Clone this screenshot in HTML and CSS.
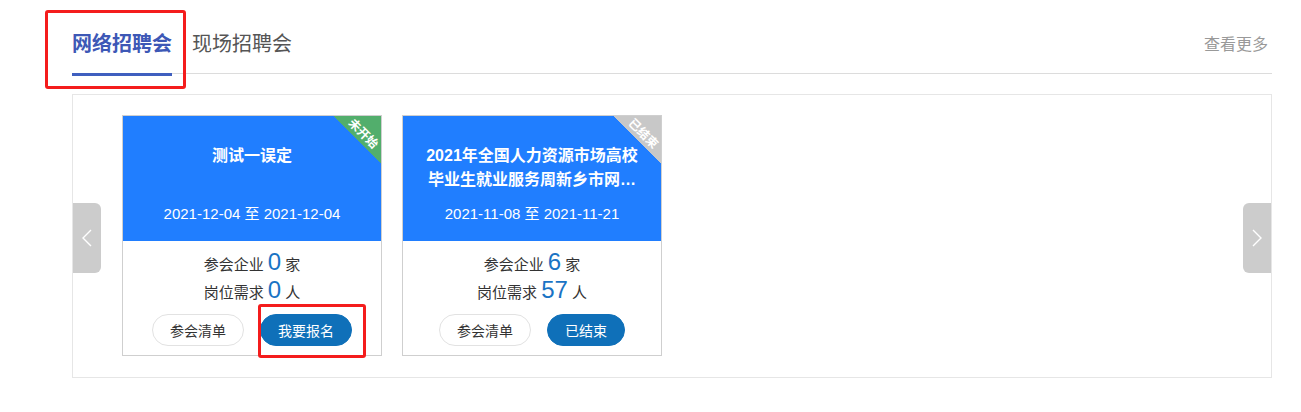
FILE: index.html
```html
<!DOCTYPE html>
<html lang="zh-CN">
<head>
<meta charset="utf-8">
<title>招聘会</title>
<link rel="stylesheet" href="styles.css">
</head>
<body>
<div class="page">
  <div class="tabs">
    <div class="tab active">网络招聘会</div>
    <div class="tab">现场招聘会</div>
    <a class="more">查看更多</a>
  </div>
  <div class="box">
    <div class="arrow arrow-left">
      <svg width="12" height="18" viewBox="0 0 12 18"><polyline points="10,1 2,9 10,17" fill="none" stroke="#fff" stroke-width="1.4"/></svg>
    </div>
    <div class="card">
      <div class="card-head">
        <div class="corner corner-green"><span>未开始</span></div>
        <div class="card-title">测试一误定</div>
        <div class="card-date">2021-12-04 至 2021-12-04</div>
      </div>
      <div class="card-body">
        <div class="stat">参会企业 <span class="num">0</span> 家</div>
        <div class="stat">岗位需求 <span class="num">0</span> 人</div>
        <div class="btns">
          <span class="btn btn-plain">参会清单</span>
          <span class="btn btn-primary">我要报名</span>
        </div>
      </div>
    </div>
    <div class="card">
      <div class="card-head">
        <div class="corner corner-gray"><span>已结束</span></div>
        <div class="card-title">2021年全国人力资源市场高校毕业生就业服务周新乡市网络招聘会</div>
        <div class="card-date">2021-11-08 至 2021-11-21</div>
      </div>
      <div class="card-body">
        <div class="stat">参会企业 <span class="num">6</span> 家</div>
        <div class="stat">岗位需求 <span class="num">57</span> 人</div>
        <div class="btns">
          <span class="btn btn-plain">参会清单</span>
          <span class="btn btn-primary">已结束</span>
        </div>
      </div>
    </div>
    <div class="arrow arrow-right">
      <svg width="12" height="18" viewBox="0 0 12 18"><polyline points="2,1 10,9 2,17" fill="none" stroke="#fff" stroke-width="1.4"/></svg>
    </div>
  </div>
</div>
<div class="mark mark-tab"></div>
<div class="mark mark-btn"></div>
</body>
</html>
```
FILE: styles.css
```css
* { box-sizing: border-box; }
body {
  margin: 0;
  background: #fff;
  font-family: "Liberation Sans", "Noto Sans CJK SC", sans-serif;
  color: #333;
  position: relative;
}
.page {
  width: 1200px;
  margin-left: 72px;
}
.tabs {
  display: flex;
  align-items: flex-start;
  border-bottom: 1px solid #dcdcdc;
}
.tab {
  font-size: 20px;
  line-height: 20px;
  padding: 33px 0 20px;
  color: #555;
  font-family: "Noto Sans CJK SC", sans-serif;
}
.tab + .tab { margin-left: 20px; }
.tab.active {
  color: #3d58b6;
  font-weight: bold;
  border-bottom: 3px solid #3f5fbf;
  margin-bottom: -3px;
}
.more {
  margin-left: auto;
  font-size: 16px;
  line-height: 16px;
  padding: 35px 4px 0 0;
  color: #999;
  font-family: "Noto Sans CJK SC", sans-serif;
}
.box {
  position: relative;
  margin-top: 20px;
  border: 1px solid #e6e6e6;
  padding: 20px 0 21px 49px;
  display: flex;
  gap: 20px;
}
.arrow {
  position: absolute;
  top: 108px;
  width: 28px;
  height: 70px;
  background: #cccccc;
  display: flex;
  align-items: center;
  justify-content: center;
}
.arrow-left { left: 0; border-radius: 0 6px 6px 0; }
.arrow-right { right: 0; border-radius: 6px 0 0 6px; }
.card {
  width: 260px;
  border: 1px solid #cfcfcf;
}
.card-head {
  position: relative;
  height: 125px;
  background: #207eff;
  color: #fff;
  padding: 28px 19px 0;
  text-align: center;
  overflow: hidden;
}
.card-title {
  font-size: 16px;
  line-height: 24px;
  height: 48px;
  font-weight: bold;
  display: -webkit-box;
  -webkit-line-clamp: 2;
  -webkit-box-orient: vertical;
  overflow: hidden;
}
.card-date {
  margin-top: 10px;
  font-size: 15px;
  line-height: 24px;
}
.corner {
  position: absolute;
  top: 0;
  right: 0;
  width: 48px;
  height: 48px;
}
.corner-green { background: linear-gradient(to bottom left, #52ae6c 50%, transparent 50%); }
.corner-gray { background: linear-gradient(to bottom left, #c8c8c8 50%, transparent 50%); }
.corner span {
  position: absolute;
  left: 13px;
  top: 10px;
  width: 36px;
  height: 14px;
  line-height: 14px;
  font-size: 12px;
  font-weight: bold;
  color: #fff;
  text-align: center;
  white-space: nowrap;
  transform: rotate(45deg);
  font-family: "Noto Sans CJK SC", sans-serif;
}
.card-body {
  height: 114px;
  padding-top: 7px;
  text-align: center;
}
.stat {
  font-size: 15px;
  line-height: 28px;
  height: 28px;
  color: #333;
}
.num {
  font-size: 24px;
  color: #1a73c4;
}
.btns {
  margin-top: 10px;
  display: flex;
  justify-content: center;
  gap: 16px;
}
.btn {
  height: 32px;
  line-height: 30px;
  padding: 0 17px;
  border-radius: 16px;
  font-size: 14px;
  border: 1px solid #e2e2e2;
  font-family: "Noto Sans CJK SC", sans-serif;
}
.btn-plain { background: #fff; color: #333; }
.btn-primary { background: #0f70b9; border-color: #0f70b9; color: #fff; }
.mark {
  position: absolute;
  border: 3px solid #f41c1c;
  border-radius: 3px;
}
.mark-tab { left: 45px; top: 10px; width: 141px; height: 79px; }
.mark-btn { left: 258px; top: 304px; width: 108px; height: 54px; }
```
